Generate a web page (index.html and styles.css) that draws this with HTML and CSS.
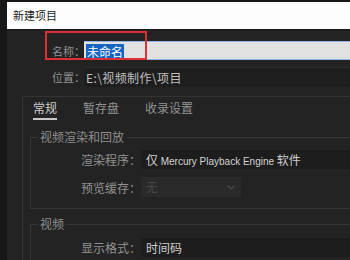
FILE: index.html
```html
<!DOCTYPE html>
<html lang="zh-CN">
<head>
  <meta charset="UTF-8" />
  <title>新建项目</title>
  <link rel="stylesheet" href="styles.css">
</head>
<body>
  <div class="dialog">
    <div class="titlebar">新建项目</div>

    <div class="content">
      <!-- 名称 / 位置 -->
      <div class="row name-row">
        <span class="label">名称：</span>
        <div class="field field-name"><span class="selected">未命名</span></div>
        <div class="mark"></div>
      </div>
      <div class="row loc-row">
        <span class="label">位置：</span>
        <div class="field field-loc">E:\视频制作\项目</div>
      </div>

      <div class="panel">
        <div class="tabs">
          <span class="tab active">常规</span>
          <span class="tab">暂存盘</span>
          <span class="tab">收录设置</span>
        </div>

        <fieldset class="group">
          <legend>视频渲染和回放</legend>
          <div class="opt-row">
            <span class="opt-label">渲染程序：</span>
            <div class="select">仅 <span class="latin">Mercury Playback Engine</span> 软件</div>
          </div>
          <div class="opt-row">
            <span class="opt-label">预览缓存：</span>
            <div class="select disabled">
              无
              <svg class="arrow" width="8" height="5" viewBox="0 0 8 5"><path d="M0.5 0.5 L4 4 L7.5 0.5" fill="none" stroke="#4a4a4a" stroke-width="1.2"/></svg>
            </div>
          </div>
        </fieldset>

        <fieldset class="group group-video">
          <legend>视频</legend>
          <div class="opt-row">
            <span class="opt-label">显示格式：</span>
            <div class="select">时间码</div>
          </div>
        </fieldset>
      </div>
    </div>
  </div>
</body>
</html>
```

FILE: styles.css
```css
html, body {
  margin: 0;
  padding: 0;
  height: 100%;
  overflow: hidden;
}
body {
  background: #171717;
  font-family: "Noto Sans CJK SC", "Liberation Sans", sans-serif;
  font-size: 12px;
  color: #929292;
}
.dialog {
  margin-left: 7px;
  padding-top: 2px;
}
.titlebar {
  height: 27px;
  line-height: 27px;
  background: #fdfdfd;
  color: #1e1e1e;
  font-size: 11px;
  padding-left: 6px;
}
.content {
  position: relative;
  box-sizing: border-box;
  margin-top: 1px;
  background: #232323;
  height: 230px;
  padding-top: 11px;
  overflow: hidden;
}
.row {
  display: flex;
  align-items: center;
  padding-left: 45px;
}
.label {
  width: 32px;
  font-size: 11px;
  white-space: nowrap;
  color: #939393;
}
.field {
  flex: 1;
  box-sizing: border-box;
}
.field-name {
  height: 19px;
  background: #e1e1e1;
  border-top: 1px solid #8db4e6;
  border-bottom: 1px solid #8db4e6;
  padding: 1px 0 0 2px;
}
.selected {
  display: inline-block;
  line-height: 15px;
  padding: 0 1px;
  background: #1664c4;
  color: #ffffff;
}
.mark {
  position: absolute;
  left: 38px;
  top: 1px;
  width: 102px;
  height: 29px;
  box-sizing: border-box;
  border: 2px solid #dc3035;
}
.loc-row {
  margin-top: 7px;
}
.field-loc {
  height: 20px;
  line-height: 20px;
  background: #1e1e1e;
  border-top: 1px solid #2c2c2c;
  padding-left: 2px;
  color: #c0c0c0;
  letter-spacing: 0.4px;
}
.panel {
  margin: 9px 0 0 15px;
  border-top: 1px solid #343434;
  border-left: 1px solid #343434;
  padding-left: 10px;
}
.tabs {
  display: flex;
  gap: 26px;
  padding-top: 3px;
}
.tab {
  line-height: 16px;
  padding-bottom: 2px;
  border-bottom: 2px solid transparent;
  color: #939393;
}
.tab.active {
  color: #cccccc;
  border-bottom-color: #c8c8c8;
}
.group {
  margin: 9px 0 0 -3px;
  padding: 5px 0 11px 0;
  border: 1px solid #363636;
  border-right: none;
  min-width: 0;
}
.group legend {
  margin-left: 6px;
  padding: 0 3px;
  line-height: 16px;
  color: #8e8e8e;
}
.group-video {
  margin-top: 7px;
  padding-top: 6px;
}
.opt-row {
  display: flex;
  align-items: center;
}
.opt-row + .opt-row {
  margin-top: 8px;
}
.opt-label {
  width: 110px;
  text-align: right;
  white-space: nowrap;
  color: #929292;
}
.select {
  flex: 1;
  height: 19px;
  line-height: 19px;
  padding-left: 5px;
  background: #1d1d1d;
  color: #cfcfcf;
  white-space: nowrap;
}
.latin {
  font-family: "Liberation Sans", sans-serif;
  font-size: 10px;
  color: #d4d4d4;
}
.select.disabled {
  flex: none;
  width: 100px;
  height: 20px;
  line-height: 20px;
  background: #2a2a2a;
  color: #464646;
  display: flex;
  align-items: center;
  justify-content: space-between;
  padding-right: 6px;
  box-sizing: border-box;
}
```
